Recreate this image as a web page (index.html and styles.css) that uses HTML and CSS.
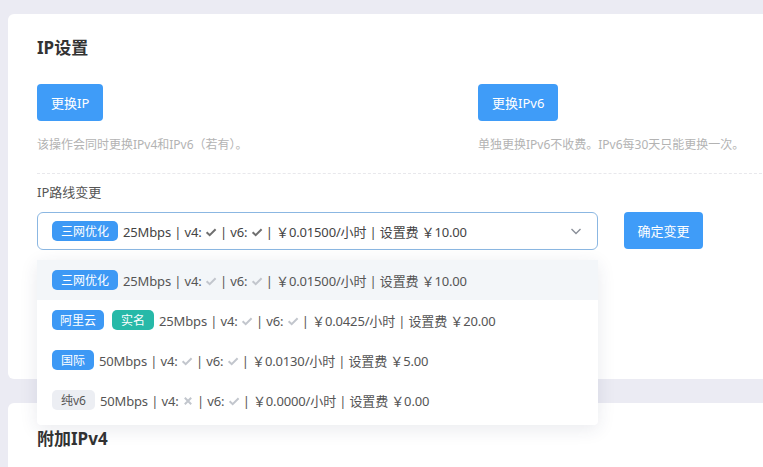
FILE: index.html
```html
<!DOCTYPE html>
<html lang="zh">
<head>
<meta charset="utf-8">
<link rel="stylesheet" href="styles.css">
</head>
<body>
<div class="page">
  <section class="card card-ip">
    <h2 class="title">IP设置</h2>
    <div class="actions">
      <div class="action">
        <button class="btn">更换IP</button>
        <p class="help">该操作会同时更换IPv4和IPv6（若有）。</p>
      </div>
      <div class="action">
        <button class="btn">更换IPv6</button>
        <p class="help">单独更换IPv6不收费。IPv6每30天只能更换一次。</p>
      </div>
    </div>
    <div class="divider"></div>
    <div class="label">IP路线变更</div>
    <div class="route-row">
      <div class="select-wrap">
        <div class="select">
          <span class="tag tag-blue">三网优化</span>
          <span class="opt-text">25Mbps | v4: <svg class="ic" viewBox="0 0 12 12"><path d="M1.6 6.2 L4.7 9.2 L10.6 3.2" fill="none" stroke="#6f6f6f" stroke-width="2"/></svg> | v6: <svg class="ic" viewBox="0 0 12 12"><path d="M1.6 6.2 L4.7 9.2 L10.6 3.2" fill="none" stroke="#6f6f6f" stroke-width="2"/></svg> | ￥0.01500/小时 | 设置费 ￥10.00</span>
          <svg class="chev" viewBox="0 0 14 14"><path d="M2.5 5 L7 9.5 L11.5 5" fill="none" stroke="#8a8f99" stroke-width="1.4"/></svg>
        </div>
        <ul class="dropdown">
          <li class="item active"><span class="tag tag-blue">三网优化</span><span class="opt-text">25Mbps | v4: <svg class="ic" viewBox="0 0 12 12"><path d="M1.6 6.2 L4.7 9.2 L10.6 3.2" fill="none" stroke="#c2c6cd" stroke-width="2"/></svg> | v6: <svg class="ic" viewBox="0 0 12 12"><path d="M1.6 6.2 L4.7 9.2 L10.6 3.2" fill="none" stroke="#c2c6cd" stroke-width="2"/></svg> | ￥0.01500/小时 | 设置费 ￥10.00</span></li>
          <li class="item"><span class="tag tag-blue tag-3">阿里云</span><span class="tag tag-teal">实名</span><span class="opt-text">25Mbps | v4: <svg class="ic" viewBox="0 0 12 12"><path d="M1.6 6.2 L4.7 9.2 L10.6 3.2" fill="none" stroke="#c2c6cd" stroke-width="2"/></svg> | v6: <svg class="ic" viewBox="0 0 12 12"><path d="M1.6 6.2 L4.7 9.2 L10.6 3.2" fill="none" stroke="#c2c6cd" stroke-width="2"/></svg> | ￥0.0425/小时 | 设置费 ￥20.00</span></li>
          <li class="item"><span class="tag tag-blue">国际</span><span class="opt-text">50Mbps | v4: <svg class="ic" viewBox="0 0 12 12"><path d="M1.6 6.2 L4.7 9.2 L10.6 3.2" fill="none" stroke="#c2c6cd" stroke-width="2"/></svg> | v6: <svg class="ic" viewBox="0 0 12 12"><path d="M1.6 6.2 L4.7 9.2 L10.6 3.2" fill="none" stroke="#c2c6cd" stroke-width="2"/></svg> | ￥0.0130/小时 | 设置费 ￥5.00</span></li>
          <li class="item"><span class="tag tag-gray">纯v6</span><span class="opt-text">50Mbps | v4: <svg class="ic" viewBox="0 0 12 12"><path d="M2.8 2.8 L9.2 9.2 M9.2 2.8 L2.8 9.2" fill="none" stroke="#c2c6cd" stroke-width="2"/></svg> | v6: <svg class="ic" viewBox="0 0 12 12"><path d="M1.6 6.2 L4.7 9.2 L10.6 3.2" fill="none" stroke="#c2c6cd" stroke-width="2"/></svg> | ￥0.0000/小时 | 设置费 ￥0.00</span></li>
        </ul>
      </div>
      <button class="btn">确定变更</button>
    </div>
  </section>
  <section class="card card-v4">
    <h2 class="title">附加IPv4</h2>
  </section>
</div>
</body>
</html>
```

FILE: styles.css
```css
html, body {
  margin: 0;
  padding: 0;
  overflow: hidden;
}
body {
  background: #ebebf3;
  font-family: "Noto Sans", "Noto Sans CJK SC", sans-serif;
  color: #444;
  width: 763px;
  height: 467px;
}
.page {
  padding: 14px 0 0 8px;
}
.card {
  background: #fff;
  border-radius: 6px;
  width: 800px;
  box-sizing: border-box;
  padding: 0 0 0 29px;
}
.card-ip {
  padding-top: 22px;
  height: 365px;
}
.card-v4 {
  margin-top: 24px;
  padding-top: 24px;
  height: 80px;
}
.title {
  margin: 0;
  font-size: 17px;
  font-weight: 700;
  color: #333;
  line-height: 24px;
}
.actions {
  display: grid;
  grid-template-columns: 441px 1fr;
  margin-top: 24px;
}
.btn {
  background: #3f9cf8;
  color: #fff;
  border: none;
  border-radius: 4px;
  height: 37px;
  padding: 0 14px;
  font-family: inherit;
  font-size: 13px;
}
.help {
  margin: 15px 0 0;
  font-size: 12px;
  color: #b3b3b3;
  line-height: 18px;
}
.divider {
  margin-top: 19px;
  width: 740px;
  border-top: 1px dashed #e8e8ec;
}
.label {
  margin-top: 9px;
  font-size: 13px;
  color: #555;
  line-height: 18px;
}
.route-row {
  display: flex;
  align-items: flex-start;
  gap: 26px;
  margin-top: 11px;
}
.route-row .btn {
  width: 79px;
  padding: 0;
}
.select-wrap {
  position: relative;
  width: 561px;
}
.select {
  display: flex;
  align-items: center;
  height: 38px;
  box-sizing: border-box;
  border: 1px solid #8bb7e2;
  border-radius: 6px;
  padding: 0 14px;
  font-size: 13px;
  color: #444;
}
.chev {
  width: 14px;
  height: 14px;
  margin-left: auto;
  margin-right: 0;
}
.tag {
  display: inline-flex;
  align-items: center;
  height: 20px;
  padding: 0 9px;
  border-radius: 5px;
  font-size: 12px;
  color: #fff;
  margin-right: 5px;
  flex: none;
}
.tag-3 {
  padding: 0 8px;
}
.tag + .tag {
  margin-left: 3px;
}
.tag-blue { background: #3d99f5; }
.tag-teal { background: #27b9a8; }
.tag-gray { background: #eceef3; color: #555; }
.opt-text {
  white-space: nowrap;
  letter-spacing: -0.15px;
}
.ic {
  width: 12px;
  height: 12px;
  vertical-align: -1px;
}
.dropdown {
  position: absolute;
  top: 48px;
  left: 0;
  width: 561px;
  margin: 0;
  padding: 0 0 5px;
  list-style: none;
  background: #fff;
  border-radius: 4px;
  box-shadow: 0 4px 18px rgba(40, 50, 90, 0.10);
  z-index: 5;
}
.item {
  display: flex;
  align-items: center;
  height: 40px;
  padding: 0 15px;
  font-size: 13px;
  color: #555;
}
.item.active {
  background: #f3f6f9;
}
```
